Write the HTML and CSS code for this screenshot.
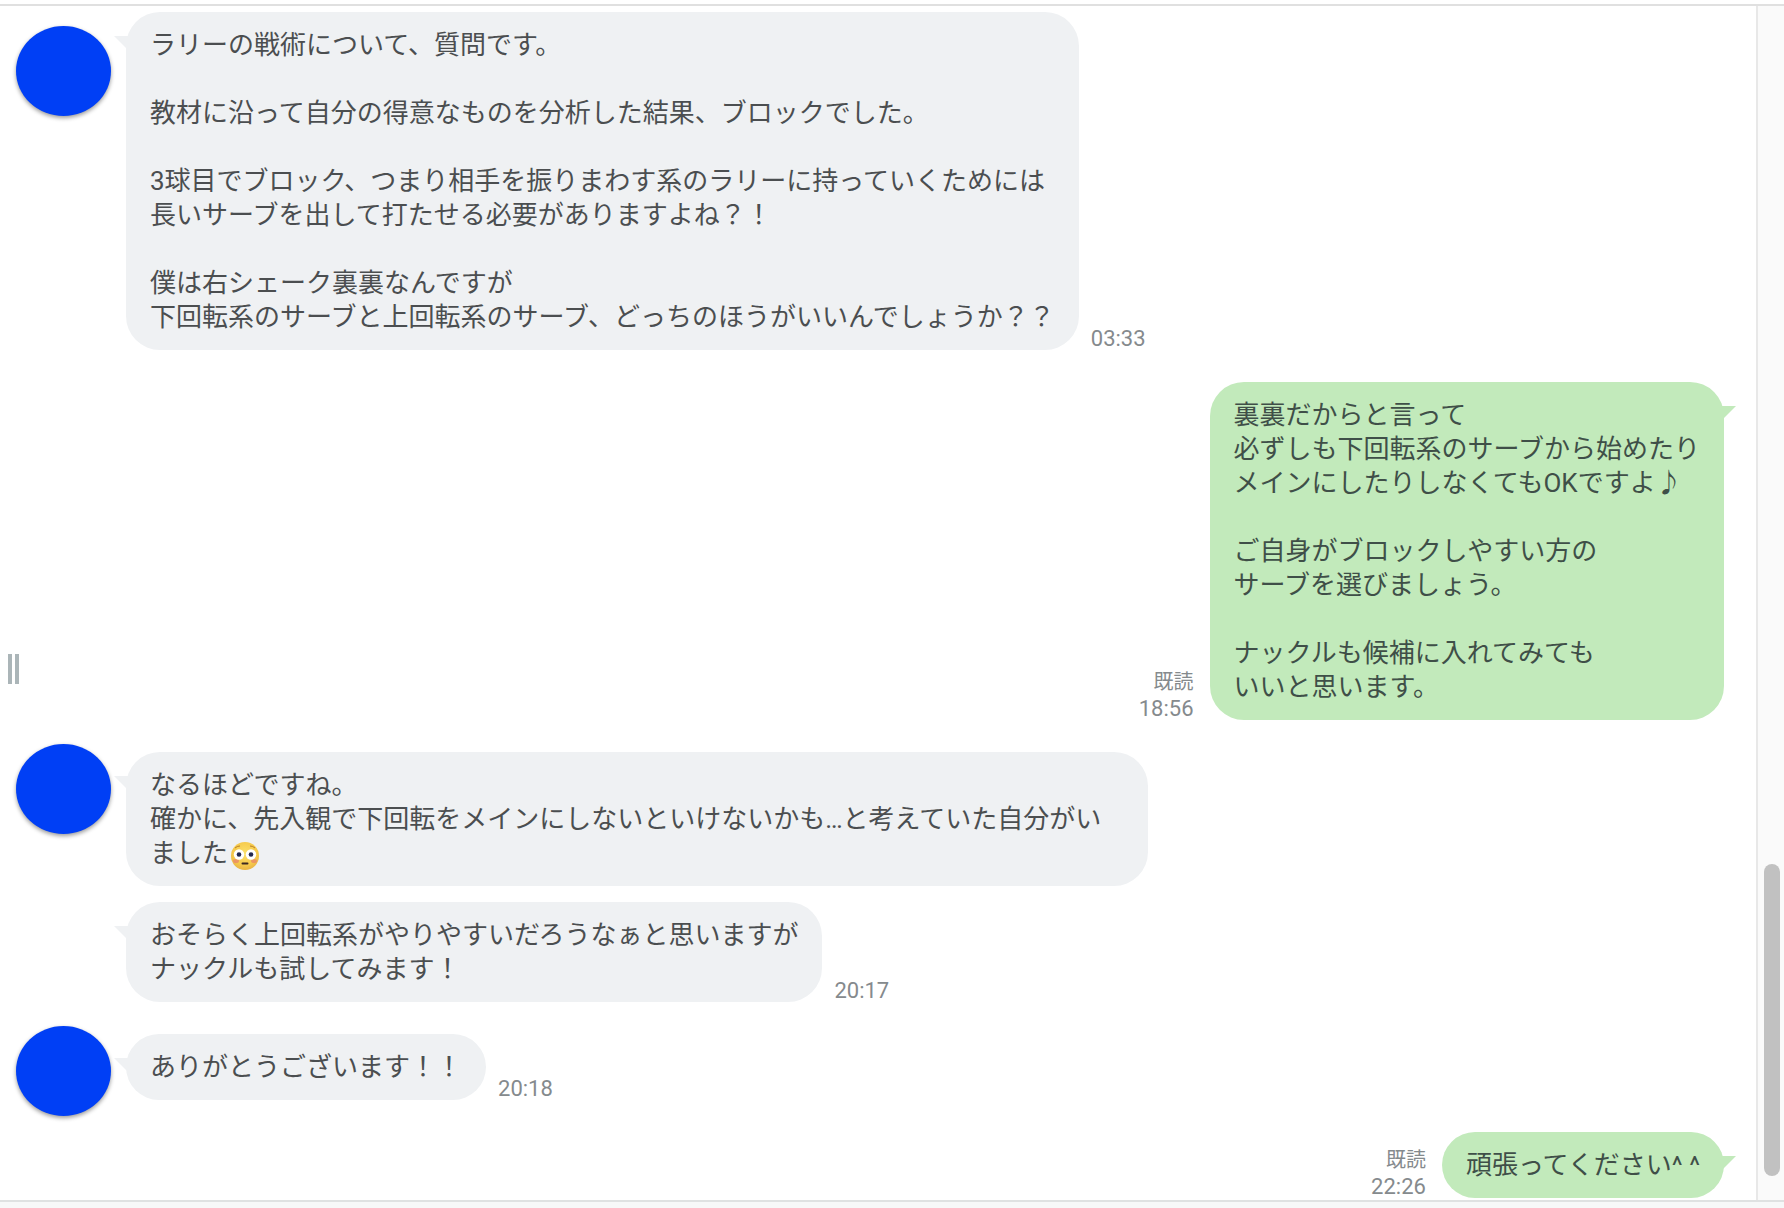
FILE: index.html
```html
<!DOCTYPE html>
<html lang="ja">
<head>
<meta charset="utf-8">
<meta name="viewport" content="width=device-width, initial-scale=1">
<title>チャット</title>
<link rel="stylesheet" href="styles.css">
</head>
<body>
<main class="chat">
  <div class="handle" aria-hidden="true"></div>

  <div class="log">
    <section class="group">
      <div class="avatar avatar-scrolled"></div>
      <div class="messages">
        <div class="row">
          <p class="bubble">ラリーの戦術について、質問です。

教材に沿って自分の得意なものを分析した結果、ブロックでした。

3球目でブロック、つまり相手を振りまわす系のラリーに持っていくためには
長いサーブを出して打たせる必要がありますよね？！

僕は右シェーク裏裏なんですが
下回転系のサーブと上回転系のサーブ、どっちのほうがいいんでしょうか？？</p>
          <div class="meta"><time>03:33</time></div>
        </div>
      </div>
    </section>

    <section class="group group-own">
      <div class="row">
        <div class="meta"><span class="read">既読</span><time>18:56</time></div>
        <p class="bubble bubble-own">裏裏だからと言って
必ずしも下回転系のサーブから始めたり
メインにしたりしなくてもOKですよ♪

ご自身がブロックしやすい方の
サーブを選びましょう。

ナックルも候補に入れてみても
いいと思います。</p>
      </div>
    </section>

    <section class="group">
      <div class="avatar"></div>
      <div class="messages">
        <div class="row">
          <p class="bubble">なるほどですね。
確かに、先入観で下回転をメインにしないといけないかも…と考えていた自分がいました<svg class="emoji" viewBox="0 0 28 28" role="img" aria-label="赤面した顔">
            <defs>
              <radialGradient id="face" cx="50%" cy="40%" r="60%">
                <stop offset="0" stop-color="#fbe06a"/>
                <stop offset="0.7" stop-color="#f6ca4c"/>
                <stop offset="1" stop-color="#e9b544"/>
              </radialGradient>
            </defs>
            <circle cx="14" cy="14" r="14" fill="url(#face)"/>
            <ellipse cx="5" cy="19" rx="3" ry="2" fill="#ea8a68" opacity="0.8"/>
            <ellipse cx="23" cy="19" rx="3" ry="2" fill="#ea8a68" opacity="0.8"/>
            <path d="M4 6Q6 4 9 4M24 6Q22 4 19 4" fill="none" stroke="#b9812a" stroke-width="1"/>
            <circle cx="8" cy="12.500" r="5.200" fill="#fff"/>
            <circle cx="20" cy="12.500" r="5.200" fill="#fff"/>
            <circle cx="8" cy="12.500" r="2.300" fill="#23284f"/>
            <circle cx="20" cy="12.500" r="2.300" fill="#23284f"/>
            <path d="M11.500 21.500H16.500" stroke="#3d2a22" stroke-width="2" stroke-linecap="round"/>
          </svg></p>
        </div>
        <div class="row">
          <p class="bubble">おそらく上回転系がやりやすいだろうなぁと思いますが
ナックルも試してみます！</p>
          <div class="meta"><time>20:17</time></div>
        </div>
      </div>
    </section>

    <section class="group">
      <div class="avatar"></div>
      <div class="messages">
        <div class="row">
          <p class="bubble">ありがとうございます！！</p>
          <div class="meta"><time>20:18</time></div>
        </div>
      </div>
    </section>

    <section class="group group-own">
      <div class="row">
        <div class="meta"><span class="read">既読</span><time>22:26</time></div>
        <p class="bubble bubble-own">頑張ってください^ ^</p>
      </div>
    </section>
  </div>

  <div class="scrollbar" aria-hidden="true">
    <div class="thumb"></div>
  </div>
</main>
</body>
</html>
```
FILE: styles.css
```css
* {
  box-sizing: border-box;
}

body {
  margin: 0;
  padding: 4px 0 6px;
  min-height: 100vh;
  display: flex;
  flex-direction: column;
  background: linear-gradient(#fff 50%, #f7f8f8 50%);
  font-family: Roboto, "Noto Sans CJK JP", sans-serif;
  color: #4b4e50;
}

.chat {
  position: relative;
  flex: 1;
  display: flex;
  border-top: 2px solid #e0e0e0;
  border-bottom: 2px solid #dfe1e1;
  background: #fff;
}

.handle {
  position: absolute;
  left: 8px;
  top: 648px;
  width: 11px;
  height: 30px;
  border: solid #abb5b8;
  border-width: 0 4px;
}

.log {
  flex: 1;
  display: flex;
  flex-direction: column;
  gap: 32px;
  padding: 6px 32px 2px 16px;
}

.group {
  display: flex;
  align-items: flex-start;
  gap: 15px;
}

.group-own {
  justify-content: flex-end;
}

.avatar {
  flex: none;
  width: 95px;
  height: 90px;
  margin: -8px 0 -16px;
  border-radius: 50%;
  background: #003ff5;
  box-shadow: 0 2px 4px rgba(0, 0, 0, 0.4);
}

.avatar-scrolled {
  margin-top: 14px;
}

.messages {
  display: flex;
  flex-direction: column;
  gap: 16px;
}

.row {
  display: flex;
  align-items: flex-end;
  gap: 12px;
}

.group-own .row {
  gap: 16px;
}

.bubble {
  position: relative;
  max-width: 1022px;
  margin: 0;
  padding: 16px 24px;
  border-radius: 34px;
  background: #eff1f3;
  font-size: 26px;
  line-height: 34px;
  white-space: pre-line;
}

.bubble::before {
  content: "";
  position: absolute;
  top: 24px;
  left: -12px;
  width: 16px;
  height: 16px;
  background: #eff1f3;
  clip-path: polygon(0 0, 100% 0, 100% 100%);
}

.bubble-own {
  background: #c2eabb;
  color: #3f4f48;
}

.bubble-own::before {
  left: auto;
  right: -12px;
  background: #c2eabb;
  clip-path: polygon(0 0, 100% 0, 0 100%);
}

.emoji {
  width: 28px;
  height: 28px;
  margin: -4px 0 -4px 3px;
  vertical-align: -4px;
}

.meta {
  display: flex;
  flex-direction: column;
  align-items: flex-end;
  color: #858a8d;
  font-size: 22px;
  line-height: 22px;
}

.read {
  font-size: 20px;
  line-height: 32px;
}

.scrollbar {
  flex: none;
  width: 28px;
  display: flex;
  flex-direction: column;
  justify-content: flex-end;
  padding: 0 4px 24px 6px;
  border-left: 2px solid #e8e8e8;
  background: #fafafa;
}

.thumb {
  height: 312px;
  border-radius: 8px;
  background: #c1c1c1;
}
```
